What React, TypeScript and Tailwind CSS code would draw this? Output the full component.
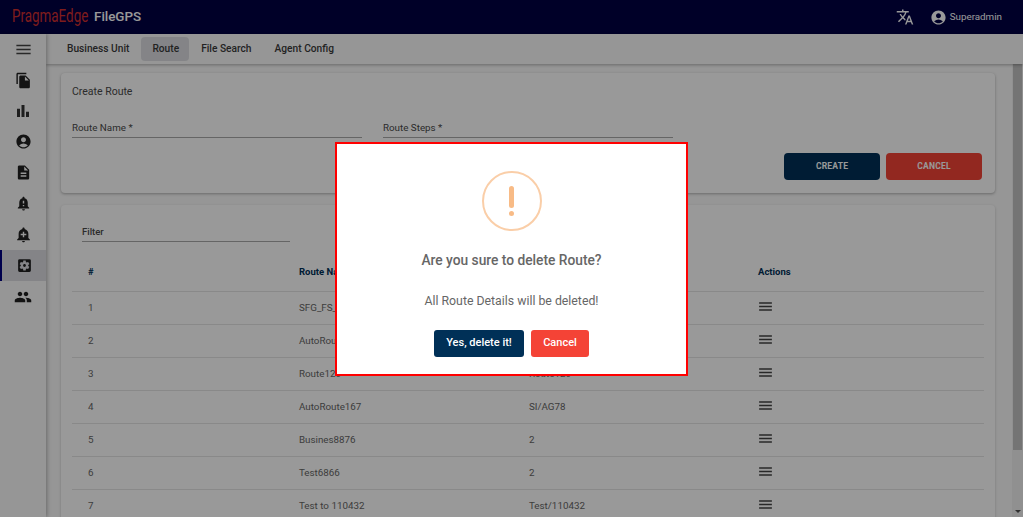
import {
  MdAccountCircle,
  MdAddAlert,
  MdBarChart,
  MdDescription,
  MdFileCopy,
  MdMenu,
  MdNotificationImportant,
  MdPeople,
  MdSettingsApplications,
  MdTranslate,
} from 'react-icons/md'

const tabs = ['Business Unit', 'Route', 'File Search', 'Agent Config']

const routes = [
  ['1', 'SFG_FS_Route', 'SFG/FS'],
  ['2', 'AutoRoute12', 'AutoRoute'],
  ['3', 'Route120', 'Route120'],
  ['4', 'AutoRoute167', 'SI/AG78'],
  ['5', 'Busines8876', '2'],
  ['6', 'Test6866', '2'],
  ['7', 'Test to 110432', 'Test/110432'],
]

const Sidebar = () => {
  return (
    <div className="w-[46px] shrink-0 bg-[#fafafa] shadow-[1px_0_4px_rgba(0,0,0,0.3)] z-10 flex flex-col text-[#212121]">
      <div className="h-[30px] flex items-center justify-center">
        <MdMenu size={19} className="text-[#444] ml-[1px]" />
      </div>
      <div className="h-[31px] flex items-center justify-center">
        <MdFileCopy size={17} className="mt-[1px]" />
      </div>
      <div className="h-[31px] flex items-center justify-center">
        <MdBarChart size={18} className="text-[#333]" />
      </div>
      <div className="h-[31px] flex items-center justify-center">
        <MdAccountCircle size={17} />
      </div>
      <div className="h-[31px] flex items-center justify-center">
        <MdDescription size={17} />
      </div>
      <div className="h-[31px] flex items-center justify-center">
        <MdNotificationImportant size={17} />
      </div>
      <div className="h-[31px] flex items-center justify-center">
        <MdAddAlert size={17} />
      </div>
      <div className="h-[31px] flex items-center justify-center bg-[#dcdde2] border-l-2 border-[#000080]">
        <MdSettingsApplications size={17} />
      </div>
      <div className="h-[31px] flex items-center justify-center">
        <MdPeople size={18} />
      </div>
    </div>
  )
}

const CreateRoute = () => {
  return (
    <div className="h-[120px] shrink-0 bg-white rounded shadow-[0_1px_3px_rgba(0,0,0,0.3)] px-[11px] pt-[13px] text-[#4a4a4a]">
      <div className="text-[10.5px] leading-[12px]">Create Route</div>
      <div className="mt-[20px] flex gap-[21px]">
        <div className="w-[290px] border-b border-[#a8a8a8] text-[9.8px] leading-[12px] h-[20px] pt-[4px]">
          Route Name *
        </div>
        <div className="w-[290px] border-b border-[#a8a8a8] text-[9.8px] leading-[12px] h-[20px] pt-[4px]">
          Route Steps *
        </div>
      </div>
      <div className="mt-[15px] flex justify-end gap-[6px] pr-[2px]">
        <button className="w-[96px] h-[27px] rounded bg-[#003057] text-white text-[8.5px] font-bold tracking-[0.2px]">
          CREATE
        </button>
        <button className="w-[96px] h-[27px] rounded bg-[#f44336] text-white text-[8.5px] font-bold tracking-[0.2px]">
          CANCEL
        </button>
      </div>
    </div>
  )
}

const RouteTable = () => {
  return (
    <div className="mt-[12px] flex-1 bg-white rounded-t shadow-[0_1px_3px_rgba(0,0,0,0.2)] px-[11px] pt-[20px]">
      <div className="ml-[10px] w-[208px] h-[17px] border-b border-[#a8a8a8] text-[9.5px] font-medium leading-[14px] text-[#4a4a4a]">
        Filter
      </div>
      <div className="mt-[12px] h-[38px] flex items-center border-b border-[#e4e4e4] text-[9.5px] font-bold text-[#003057]">
        <div className="w-[227px] pl-[16px]">#</div>
        <div className="w-[230px]">Route Name</div>
        <div className="w-[229px]">Route Steps</div>
        <div>Actions</div>
      </div>
      {routes.map((route) => (
        <div
          key={route[0]}
          className="h-[33px] flex items-center border-b border-[#e4e4e4] text-[9.8px] text-[#666]"
        >
          <div className="w-[227px] pl-[16px]">{route[0]}</div>
          <div className="w-[230px]">{route[1]}</div>
          <div className="w-[229px]">{route[2]}</div>
          <MdMenu size={17} className="text-[#444] -mt-[4px] -ml-[1px]" />
        </div>
      ))}
    </div>
  )
}

const DeleteDialog = () => {
  return (
    <div className="fixed top-0 left-0 w-[1023px] h-[517px] pt-[1px] bg-black/40 z-20 flex items-center justify-center">
      <div className="w-[353px] h-[234px] bg-white border-2 border-[#ff0000] flex flex-col items-center pt-[27px]">
        <div className="w-[60px] h-[60px] rounded-full border-2 border-[#facea8] flex flex-col items-center justify-center">
          <div className="w-[5px] h-[22px] rounded-sm bg-[#f8bb86]" />
          <div className="w-[5px] h-[5px] rounded-full bg-[#f8bb86] mt-[3px]" />
        </div>
        <div className="mt-[19px] text-[13.75px] leading-[20px] font-medium text-[#666]">
          Are you sure to delete Route?
        </div>
        <div className="mt-[23px] text-[12.3px] leading-[16px] text-[#666]">
          All Route Details will be deleted!
        </div>
        <div className="mt-[21px] flex gap-[7px]">
          <button className="w-[90px] h-[27px] rounded-[3px] bg-[#003057] text-white text-[11px] font-medium">
            Yes, delete it!
          </button>
          <button className="w-[58px] h-[27px] rounded-[3px] bg-[#f44336] text-white text-[11px] font-medium">
            Cancel
          </button>
        </div>
      </div>
    </div>
  )
}

export default function App() {
  return (
    <div className="w-[1024px] h-[518px] bg-white overflow-hidden relative font-['Roboto',sans-serif]">
      <div className="w-[1023px] h-[517px] flex flex-col bg-[#fafafa] overflow-hidden">
        <div className="h-[34px] shrink-0 bg-[#000044] flex items-center pl-[12px] pr-[21px] text-white">
          <div className="w-[82px] shrink-0">
            <span className="inline-block origin-left scale-x-[0.745] text-[#d32f2f] text-[18px] leading-[20px] whitespace-nowrap">
              PragmaEdge
            </span>
          </div>
          <span className="text-[13.4px] font-medium">FileGPS</span>
          <div className="ml-auto flex items-center gap-[16px]">
            <MdTranslate size={18} />
            <div className="flex items-center gap-[3px] text-[9.8px]">
              <MdAccountCircle size={17} />
              <span>Superadmin</span>
            </div>
          </div>
        </div>
        <div className="flex flex-1 min-h-0">
          <Sidebar />
          <div className="flex-1 min-w-0 flex flex-col">
            <div className="h-[30px] shrink-0 bg-[#fafafa] shadow-[0_1px_3px_rgba(0,0,0,0.3)] flex items-center pl-[10px] gap-[1px] z-[1]">
              {tabs.map((tab) => (
                <div
                  key={tab}
                  className={
                    tab === 'Route'
                      ? 'h-[24px] pl-[11px] pr-[10px] flex items-center rounded-sm bg-[#dcdde2] text-[10.2px] font-medium text-[#3a3a3a]'
                      : 'h-[24px] px-[11px] flex items-center text-[10.2px] font-medium text-[#3a3a3a]'
                  }
                >
                  {tab}
                </div>
              ))}
            </div>
            <div className="flex-1 min-h-0 flex">
              <div className="flex-1 min-w-0 pl-[15px] pr-[17px] pt-[9px] flex flex-col overflow-hidden">
                <CreateRoute />
                <RouteTable />
              </div>
              <div className="w-[11px] shrink-0 bg-[#f1f1f1] flex flex-col items-center justify-between pb-[4px]">
                <div className="w-[9px] h-[386px] bg-[#c1c1c1]" />
                <div className="w-0 h-0 border-x-[3px] border-x-transparent border-t-[3px] border-t-[#505050]" />
              </div>
            </div>
          </div>
        </div>
      </div>
      <DeleteDialog />
    </div>
  )
}
